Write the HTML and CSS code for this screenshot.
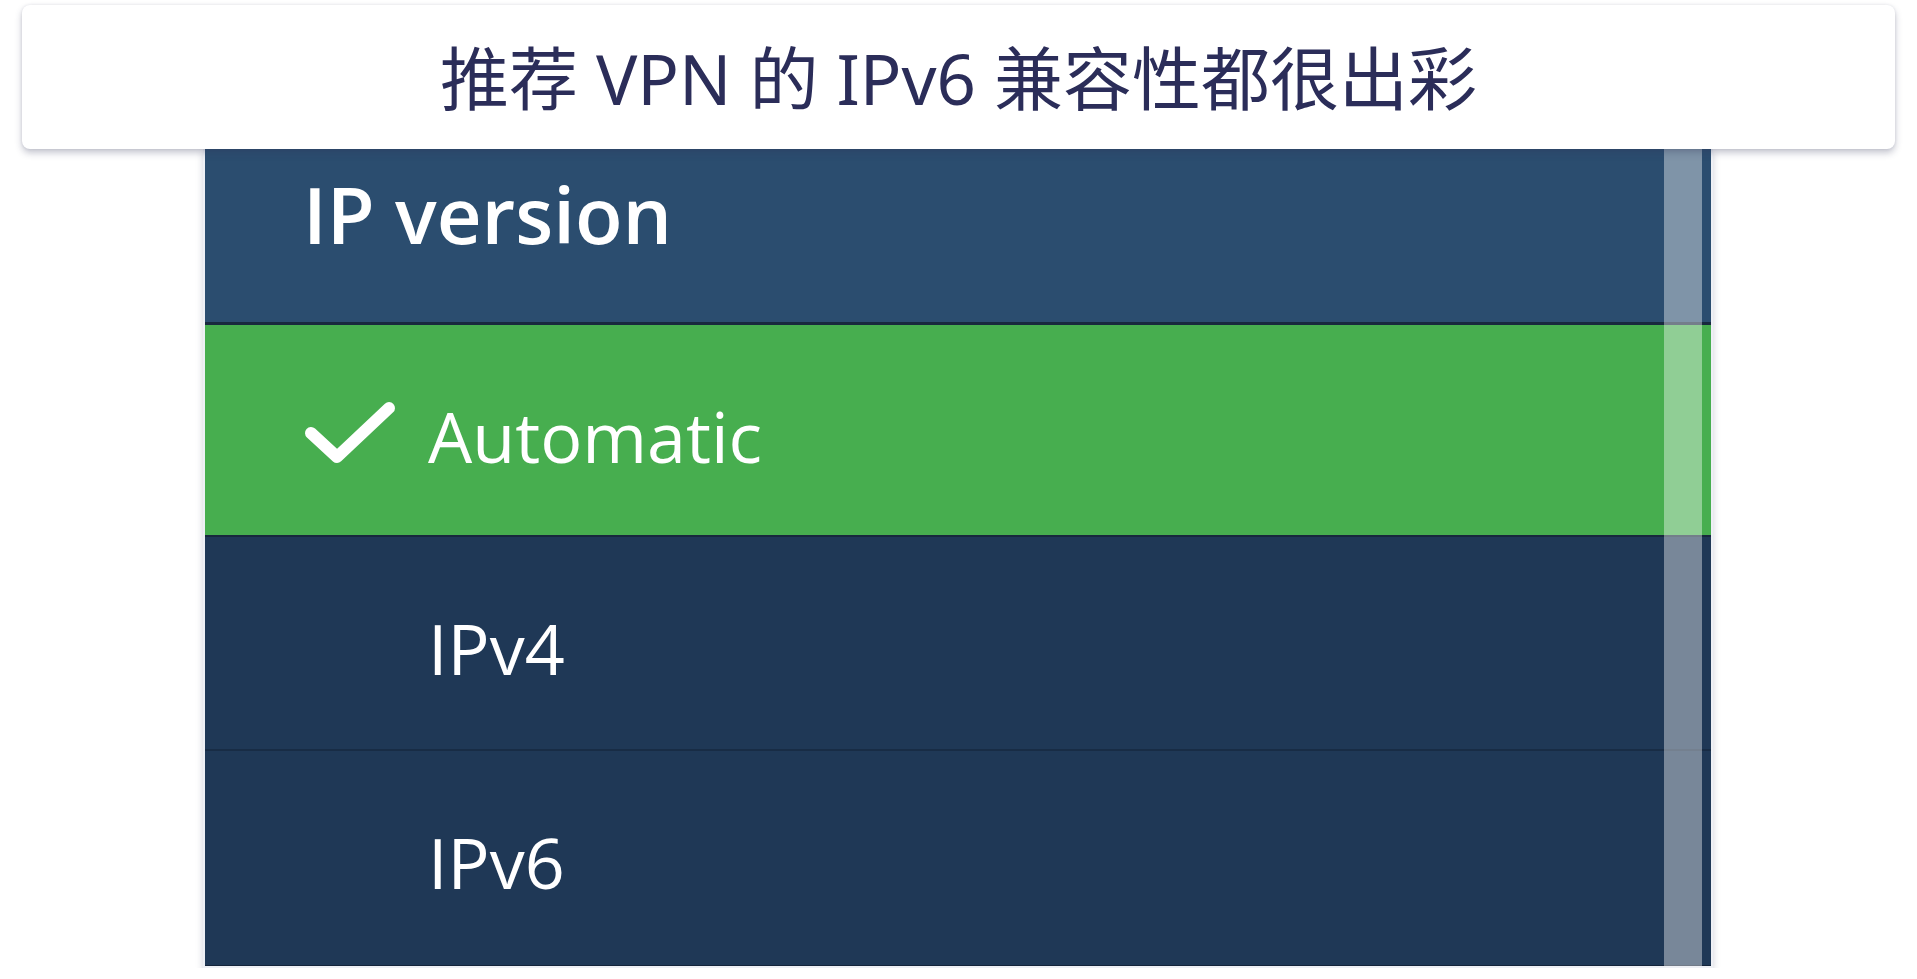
FILE: index.html
```html
<!doctype html>
<html lang="zh-CN">
<head>
  <meta charset="utf-8" />
  <meta name="viewport" content="width=device-width,initial-scale=1" />
  <title>推荐 VPN 的 IPv6 兼容性都很出彩</title>
  <link rel="stylesheet" href="styles.css">
</head>
<body>

<div class="caption">
  <h1>推荐 VPN 的 IPv6 兼容性都很出彩</h1>
</div>

<div class="panel">
  <div class="panel-head">IP version</div>
  <div class="option selected">
    <span class="tick">
      <svg width="100" height="72" viewBox="0 0 100 72"><path d="M11 37 L37 61 L89 12" fill="none" stroke="#fff" stroke-width="12" stroke-linecap="round" stroke-linejoin="round"/></svg>
    </span>
    <span class="label">Automatic</span>
  </div>
  <div class="option">
    <span class="tick"></span>
    <span class="label">IPv4</span>
  </div>
  <div class="option last">
    <span class="tick"></span>
    <span class="label">IPv6</span>
  </div>
  <div class="scrollbar"></div>
</div>

</body>
</html>
```

FILE: styles.css
```css
body{margin:0;background:#fff;font-family:"Open Sans", "Noto Sans", sans-serif;}
.caption{position:relative;z-index:2;margin:5px 22px 0;height:144px;background:#fff;border-radius:8px;box-shadow:0 4px 7px rgba(50,55,90,.28), 0 0 3px rgba(50,55,90,.12);display:flex;align-items:center;justify-content:center;}
.caption h1{margin:0;font-family:"Noto Sans", "Noto Sans CJK SC", sans-serif;font-weight:400;font-size:69px;line-height:1;color:#2b2d59;padding-top:2px;}
.panel{position:relative;margin-left:203px;width:1506px;border:2px solid #eef0f5;border-top:0;box-shadow:0 3px 7px rgba(40,45,80,.22);background:#1f3856;color:#fff;}
.panel-head{box-sizing:border-box;height:176px;padding:26px 0 0 98px;background:#2b4d6f;border-bottom:3px solid #18293e;font-weight:600;font-size:78px;line-height:1;}
.option{display:flex;align-items:flex-start;box-sizing:border-box;height:214px;padding:76px 0 0 95px;border-bottom:2px solid #182c45;font-size:70px;line-height:1;}
.option.selected{height:212px;background:#47ae4f;border-bottom:2px solid #17283d;}
.option.last{height:215px;border-bottom:1px solid #14243a;}
.tick{width:100px;height:70px;margin-right:28px;}
.tick svg{display:block;margin-top:-5px;}
.scrollbar{position:absolute;top:0;bottom:0;right:9px;width:38px;background:rgba(255,255,255,.4);}
```
